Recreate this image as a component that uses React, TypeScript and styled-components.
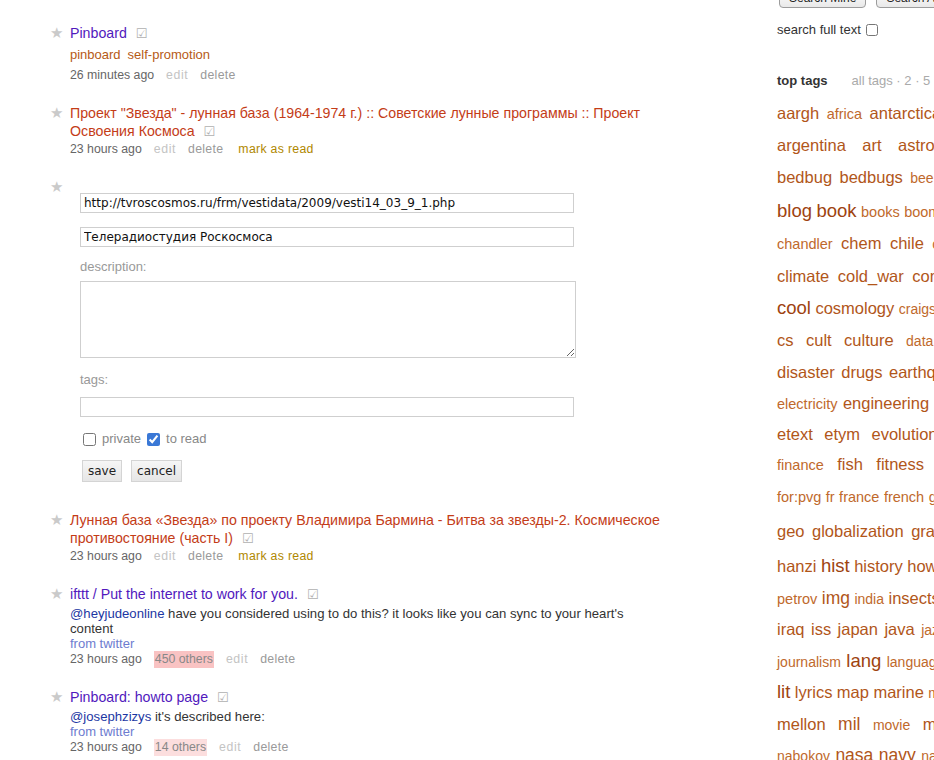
import React from 'react';
import styled, { createGlobalStyle } from 'styled-components';

const GlobalStyle = createGlobalStyle`
  html, body {
    margin: 0;
    padding: 0;
    background: #fff;
    overflow: hidden;
  }
  body {
    font-family: "Liberation Sans", Arial, Helvetica, sans-serif;
    color: #333;
  }
`;

const Page = styled.div`
  display: flex;
  align-items: flex-start;
  padding-left: 50px;
  width: 1200px;
`;

const Main = styled.div`
  width: 727px;
  flex-shrink: 0;
  padding-top: 24px;
`;

const Bookmark = styled.div<{ $gap?: number }>`
  display: flex;
  margin-bottom: ${(p) => p.$gap ?? 20}px;
`;

const Star = styled.div`
  width: 20px;
  flex-shrink: 0;
  font-family: "DejaVu Sans", sans-serif;
  font-size: 15px;
  line-height: 18px;
  color: #cacaca;
`;

const Body = styled.div`
  width: 592px;
`;

const TitleLine = styled.div`
  font-size: 14.2px;
  line-height: 18px;
`;

const TitleLink = styled.a<{ $unread?: boolean }>`
  color: ${(p) => (p.$unread ? '#c43c17' : '#5119bd')};
  text-decoration: none;
`;

const Check = styled.span`
  font-family: "DejaVu Sans", sans-serif;
  font-size: 13px;
  line-height: 1;
  color: #b0b0b0;
  margin-left: 9px;
`;

const TagLine = styled.div`
  display: flex;
  gap: 7px;
  margin-top: 4px;
  font-size: 13px;
  line-height: 18px;
`;

const BmTag = styled.a`
  color: #b65a16;
  text-decoration: none;
`;

const Desc = styled.div`
  margin-top: 3px;
  font-size: 13.15px;
  line-height: 15px;
  color: #333;
`;

const Mention = styled.a`
  color: #1c37a3;
  text-decoration: none;
`;

const Via = styled.div`
  font-size: 13px;
  line-height: 15px;
  color: #6d7ccf;
`;

const Meta = styled.div<{ $mt?: number }>`
  display: flex;
  gap: 12px;
  margin-top: ${(p) => p.$mt ?? 1}px;
  font-size: 12.3px;
  line-height: 17px;
  color: #666;
`;

const MetaLink = styled.a<{ $tone: 'edit' | 'delete' | 'read' }>`
  color: ${(p) => (p.$tone === 'edit' ? '#c4c4c4' : p.$tone === 'delete' ? '#9a9a9a' : '#b08800')};
  margin-left: ${(p) => (p.$tone === 'read' ? 3 : 0)}px;
  letter-spacing: ${(p) => (p.$tone === 'edit' ? 0.6 : 0.3)}px;
  text-decoration: none;
`;

const Others = styled.span<{ $light?: boolean }>`
  background: ${(p) => (p.$light ? '#fcdede' : '#f9c3c3')};
  color: #888;
  padding: 0 1px;
`;

/* edit form */

const Form = styled.form`
  padding: 15px 0 8px 10px;
  display: flex;
  flex-direction: column;
  align-items: flex-start;
`;

const Field = styled.input<{ $mt?: number }>`
  box-sizing: border-box;
  width: 494px;
  height: 20px;
  margin: ${(p) => p.$mt ?? 0}px 0 0;
  padding: 0 3px;
  border: 1px solid #cfcfcf;
  font-family: "DejaVu Sans", sans-serif;
  font-size: 12px;
  color: #111;
  outline: none;
`;

const Label = styled.div<{ $mt: number }>`
  margin-top: ${(p) => p.$mt}px;
  font-size: 13px;
  line-height: 16px;
  color: #999;
`;

const Area = styled.textarea`
  box-sizing: border-box;
  width: 496px;
  height: 77px;
  margin: 6px 0 0;
  border: 1px solid #cfcfcf;
  resize: both;
  outline: none;
`;

const Checks = styled.label`
  display: flex;
  align-items: center;
  gap: 6px;
  margin: 14px 0 0 3px;
  font-size: 13px;
  line-height: 16px;
  color: #888;

  input {
    margin: 0;
    width: 13px;
    height: 13px;
    accent-color: #3a78d6;
  }
`;

const Buttons = styled.div`
  display: flex;
  gap: 9px;
  margin: 13px 0 0 2px;
`;

const FormButton = styled.button`
  height: 22px;
  padding: 0 5px;
  border: 1px solid #d4d4d4;
  background: linear-gradient(#f6f6f6, #e6e6e6);
  font-family: "DejaVu Sans", sans-serif;
  font-size: 12px;
  color: #222;
`;

/* sidebar */

const Side = styled.div`
  width: 300px;
  flex-shrink: 0;
  margin-top: -12px;
`;

const SearchRow = styled.div`
  display: flex;
  gap: 10px;
  margin-left: 2px;
`;

const SearchButton = styled.button`
  height: 20px;
  padding: 0 9px;
  border: 1px solid #9c9c9c;
  border-radius: 4px;
  background: linear-gradient(#ffffff, #e9e9e9);
  font-family: "Liberation Sans", Arial, sans-serif;
  font-size: 12px;
  color: #222;
`;

const FullText = styled.label`
  display: flex;
  align-items: center;
  gap: 5px;
  margin-top: 14px;
  font-size: 13px;
  line-height: 16px;
  color: #333;

  input {
    margin: 0;
    width: 12px;
    height: 12px;
  }
`;

const TagsHead = styled.div`
  display: flex;
  margin-top: 35px;
  font-size: 13px;
  line-height: 16px;
`;

const HeadTitle = styled.b`
  color: #333;
`;

const HeadLinks = styled.span`
  margin-left: 24px;
  color: #aaa;
`;

const Cloud = styled.div`
  margin-top: 9px;
`;

const CloudRow = styled.div<{ $h: number; $ws: number }>`
  height: ${(p) => p.$h}px;
  line-height: ${(p) => p.$h}px;
  white-space: nowrap;
  word-spacing: ${(p) => p.$ws}px;
`;

const tagColor = (size: number) =>
  size >= 18 ? '#9e4310' : size >= 16 ? '#b1561a' : size >= 14 ? '#c0692c' : '#c97b44';

const CloudTag = styled.a<{ $size: number }>`
  font-size: ${(p) => p.$size}px;
  color: ${(p) => tagColor(p.$size)};
  text-decoration: none;
  word-spacing: normal;
`;

type Row = { h: number; ws: number; tags: [string, number][] };

const cloud: Row[] = [
  { h: 31, ws: 3, tags: [['aargh', 16.5], ['africa', 14.5], ['antarctica', 16.5]] },
  { h: 32, ws: 12, tags: [['argentina', 16.5], ['art', 16.5], ['astronomy', 16.5]] },
  { h: 33, ws: 3, tags: [['bedbug', 16.5], ['bedbugs', 16.5], ['beer', 14], ['berlin', 14]] },
  { h: 33, ws: 0, tags: [['blog', 18.5], ['book', 18.5], ['books', 14.5], ['boom', 14.5]] },
  { h: 33, ws: 4, tags: [['chandler', 14.5], ['chem', 16.5], ['chile', 16.5], ['china', 14]] },
  { h: 32, ws: 4, tags: [['climate', 16.5], ['cold_war', 16.5], ['comics', 16.5]] },
  { h: 32, ws: 0, tags: [['cool', 18.5], ['cosmology', 16.5], ['craigslist', 14]] },
  { h: 32, ws: 8, tags: [['cs', 16.5], ['cult', 16.5], ['culture', 16.5], ['data', 14]] },
  { h: 32, ws: 2, tags: [['disaster', 16.5], ['drugs', 16.5], ['earthquake', 16.5]] },
  { h: 31, ws: 1, tags: [['electricity', 14.5], ['engineering', 16.5], ['espionage', 16.5]] },
  { h: 30, ws: 7, tags: [['etext', 16.5], ['etym', 16.5], ['evolution', 16.5]] },
  { h: 31, ws: 9, tags: [['finance', 14.5], ['fish', 16.5], ['fitness', 16.5], ['food', 16.5]] },
  { h: 33, ws: 0, tags: [['for:pvg', 14.5], ['fr', 14.5], ['france', 14.5], ['french', 14.5], ['games', 14.5]] },
  { h: 36, ws: 3, tags: [['geo', 16.5], ['globalization', 16.5], ['graphics', 16.5]] },
  { h: 33, ws: 0, tags: [['hanzi', 16.5], ['hist', 18.5], ['history', 16.5], ['howto', 16.5]] },
  { h: 32, ws: 0, tags: [['petrov', 14.5], ['img', 17.5], ['india', 14], ['insects', 16.5]] },
  { h: 31, ws: 2, tags: [['iraq', 16.5], ['iss', 16.5], ['japan', 16.5], ['java', 16.5], ['jazz', 14]] },
  { h: 31, ws: 1, tags: [['journalism', 14], ['lang', 18.5], ['language', 14]] },
  { h: 32, ws: 0, tags: [['lit', 18.5], ['lyrics', 16.5], ['map', 16.5], ['marine', 16.5], ['math', 14]] },
  { h: 32, ws: 8, tags: [['mellon', 16.5], ['mil', 17.5], ['movie', 14], ['music', 16.5]] },
  { h: 30, ws: 1, tags: [['nabokov', 14], ['nasa', 17.5], ['navy', 17.5], ['nature', 14]] },
];

function Actions({ when, others, light, read, mt }: { when: string; others?: string; light?: boolean; read?: boolean; mt?: number }) {
  return (
    <Meta $mt={mt}>
      <span>{when}</span>
      {others && <Others $light={light}>{others}</Others>}
      <MetaLink $tone="edit">edit</MetaLink>
      <MetaLink $tone="delete">delete</MetaLink>
      {read && <MetaLink $tone="read">mark as read</MetaLink>}
    </Meta>
  );
}

export default function App() {
  return (
    <>
      <GlobalStyle />
      <Page>
        <Main>
          <Bookmark>
            <Star>★</Star>
            <Body>
              <TitleLine>
                <TitleLink>Pinboard</TitleLink>
                <Check>☑</Check>
              </TitleLine>
              <TagLine>
                <BmTag>pinboard</BmTag>
                <BmTag>self-promotion</BmTag>
              </TagLine>
              <Actions when="26 minutes ago" mt={3} />
            </Body>
          </Bookmark>

          <Bookmark>
            <Star>★</Star>
            <Body>
              <TitleLine>
                <TitleLink $unread>
                  Проект "Звезда" - лунная база (1964-1974 г.) :: Советские лунные программы :: Проект Освоения Космоса
                </TitleLink>
                <Check>☑</Check>
              </TitleLine>
              <Actions when="23 hours ago" read />
            </Body>
          </Bookmark>

          <Bookmark $gap={21}>
            <Star>★</Star>
            <Form onSubmit={(e) => e.preventDefault()}>
              <Field defaultValue="http://tvroscosmos.ru/frm/vestidata/2009/vesti14_03_9_1.php" />
              <Field $mt={14} defaultValue="Телерадиостудия Роскосмоса" />
              <Label $mt={12}>description:</Label>
              <Area />
              <Label $mt={14}>tags:</Label>
              <Field $mt={9} />
              <Checks>
                <input type="checkbox" />
                <span>private</span>
                <input type="checkbox" defaultChecked />
                <span>to read</span>
              </Checks>
              <Buttons>
                <FormButton type="button">save</FormButton>
                <FormButton type="button">cancel</FormButton>
              </Buttons>
            </Form>
          </Bookmark>

          <Bookmark>
            <Star>★</Star>
            <Body>
              <TitleLine>
                <TitleLink $unread>
                  Лунная база «Звезда» по проекту Владимира Бармина - Битва за звезды-2. Космическое противостояние (часть I)
                </TitleLink>
                <Check>☑</Check>
              </TitleLine>
              <Actions when="23 hours ago" read />
            </Body>
          </Bookmark>

          <Bookmark>
            <Star>★</Star>
            <Body>
              <TitleLine>
                <TitleLink>ifttt / Put the internet to work for you.</TitleLink>
                <Check>☑</Check>
              </TitleLine>
              <Desc>
                <Mention>@heyjudeonline</Mention> have you considered using to do this? it looks like you can sync to your
                heart's content
              </Desc>
              <Via>from twitter</Via>
              <Actions when="23 hours ago" others="450 others" mt={0} />
            </Body>
          </Bookmark>

          <Bookmark>
            <Star>★</Star>
            <Body>
              <TitleLine>
                <TitleLink>Pinboard: howto page</TitleLink>
                <Check>☑</Check>
              </TitleLine>
              <Desc>
                <Mention>@josephzizys</Mention> it's described here:
              </Desc>
              <Via>from twitter</Via>
              <Actions when="23 hours ago" others="14 others" light mt={0} />
            </Body>
          </Bookmark>
        </Main>

        <Side>
          <SearchRow>
            <SearchButton>Search Mine</SearchButton>
            <SearchButton>Search All</SearchButton>
          </SearchRow>
          <FullText>
            search full text
            <input type="checkbox" />
          </FullText>
          <TagsHead>
            <HeadTitle>top tags</HeadTitle>
            <HeadLinks>all tags · 2 · 5</HeadLinks>
          </TagsHead>
          <Cloud>
            {cloud.map((row, i) => (
              <CloudRow key={i} $h={row.h} $ws={row.ws}>
                {row.tags.map(([name, size], j) => (
                  <React.Fragment key={name}>
                    {j > 0 && ' '}
                    <CloudTag $size={size}>{name}</CloudTag>
                  </React.Fragment>
                ))}
              </CloudRow>
            ))}
          </Cloud>
        </Side>
      </Page>
    </>
  );
}
